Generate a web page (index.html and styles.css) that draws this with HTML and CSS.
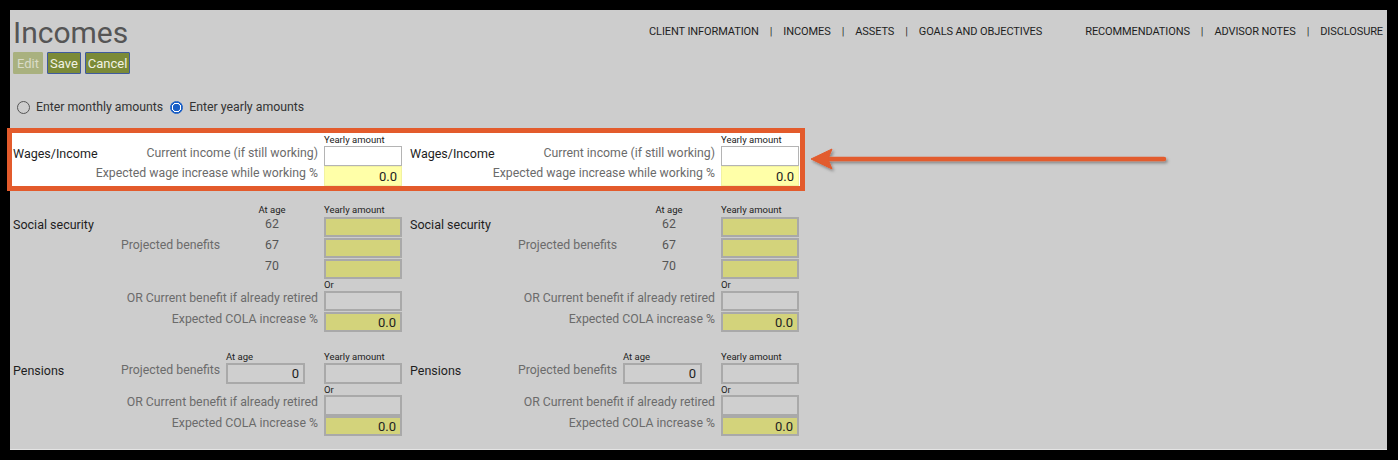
FILE: index.html
```html
<!DOCTYPE html>
<html lang="en">
<head>
  <meta charset="UTF-8">
  <title>Incomes</title>
  <meta name="viewport" content="width=device-width, initial-scale=1.0">
  <link rel="stylesheet" href="styles.css">
</head>
<body>

  <div class="frame">
    <div class="top">
      <div>
        <h1 class="title">Incomes</h1>
        <div class="actions">
          <button class="btn btn-off">Edit</button>
          <button class="btn">Save</button>
          <button class="btn">Cancel</button>
        </div>
      </div>
      <nav class="nav">
        <div class="nav-group">
          <a>CLIENT INFORMATION</a><span class="sep">|</span>
          <a>INCOMES</a><span class="sep">|</span>
          <a>ASSETS</a><span class="sep">|</span>
          <a>GOALS AND OBJECTIVES</a>
        </div>
        <div class="nav-group">
          <a>RECOMMENDATIONS</a><span class="sep">|</span>
          <a>ADVISOR NOTES</a><span class="sep">|</span>
          <a>DISCLOSURE</a>
        </div>
      </nav>
    </div>

    <div class="mode">
      <label class="radio"><span class="dot"></span>Enter monthly amounts</label>
      <label class="radio"><span class="dot on"></span>Enter yearly amounts</label>
    </div>

    <!-- wages -->
    <div class="band band-wages">
      <div class="sect sect-wages">
        <div class="hd col-in">Yearly amount</div>
        <div class="name">Wages/Income</div>
        <div class="lbl span-2">Current income (if still working)</div>
        <div class="field white"></div>
        <div class="lbl span-3">Expected wage increase while working %</div>
        <div class="field yellow">0.0</div>
      </div>
      <div class="sect sect-wages">
        <div class="hd col-in">Yearly amount</div>
        <div class="name">Wages/Income</div>
        <div class="lbl span-2">Current income (if still working)</div>
        <div class="field white"></div>
        <div class="lbl span-3">Expected wage increase while working %</div>
        <div class="field yellow">0.0</div>
      </div>
    </div>

    <!-- social security -->
    <div class="band">
      <div class="sect sect-ss">
        <div class="hd col-age center">At age</div>
        <div class="hd col-in">Yearly amount</div>
        <div class="name">Social security</div>
        <div class="age col-age">62</div>
        <div class="field olive"></div>
        <div class="lbl col-lbl">Projected benefits</div>
        <div class="age col-age">67</div>
        <div class="field olive"></div>
        <div class="age col-age">70</div>
        <div class="field olive"></div>
        <div class="or col-in">Or</div>
        <div class="lbl span-3">OR Current benefit if already retired</div>
        <div class="field gray"></div>
        <div class="lbl span-3">Expected COLA increase %</div>
        <div class="field olive">0.0</div>
      </div>
      <div class="sect sect-ss">
        <div class="hd col-age center">At age</div>
        <div class="hd col-in">Yearly amount</div>
        <div class="name">Social security</div>
        <div class="age col-age">62</div>
        <div class="field olive"></div>
        <div class="lbl col-lbl">Projected benefits</div>
        <div class="age col-age">67</div>
        <div class="field olive"></div>
        <div class="age col-age">70</div>
        <div class="field olive"></div>
        <div class="or col-in">Or</div>
        <div class="lbl span-3">OR Current benefit if already retired</div>
        <div class="field gray"></div>
        <div class="lbl span-3">Expected COLA increase %</div>
        <div class="field olive">0.0</div>
      </div>
    </div>

    <!-- pensions -->
    <div class="band band-pen">
      <div class="sect sect-pen">
        <div class="hd col-age">At age</div>
        <div class="hd col-in">Yearly amount</div>
        <div class="name">Pensions</div>
        <div class="lbl col-lbl">Projected benefits</div>
        <div class="col-age"><div class="field gray age-box">0</div></div>
        <div class="field gray"></div>
        <div class="or col-in">Or</div>
        <div class="lbl span-3">OR Current benefit if already retired</div>
        <div class="field gray"></div>
        <div class="lbl span-3">Expected COLA increase %</div>
        <div class="field olive">0.0</div>
      </div>
      <div class="sect sect-pen">
        <div class="hd col-age">At age</div>
        <div class="hd col-in">Yearly amount</div>
        <div class="name">Pensions</div>
        <div class="lbl col-lbl">Projected benefits</div>
        <div class="col-age"><div class="field gray age-box">0</div></div>
        <div class="field gray"></div>
        <div class="or col-in">Or</div>
        <div class="lbl span-3">OR Current benefit if already retired</div>
        <div class="field gray"></div>
        <div class="lbl span-3">Expected COLA increase %</div>
        <div class="field olive">0.0</div>
      </div>
    </div>
  </div>

  <!-- annotation arrow -->
  <svg class="arrow" width="380" height="40" viewBox="0 0 380 40">
    <defs>
      <filter id="shade" x="-10%" y="-50%" width="120%" height="200%">
        <feDropShadow dx="1.5" dy="2" stdDeviation="1.5" flood-color="#000" flood-opacity="0.35"/>
      </filter>
    </defs>
    <g filter="url(#shade)" fill="#e25b2d" stroke="#e25b2d">
      <line x1="18" y1="16" x2="356" y2="16" stroke-width="4.5" stroke-linecap="round"/>
      <polygon points="3,16 24,6 20,16 24,26" stroke-width="1" stroke-linejoin="round"/>
    </g>
  </svg>

</body>
</html>
```

FILE: styles.css
```css
body {
  margin: 0;
  background: #000;
  font-family: Roboto, "Liberation Sans", sans-serif;
  position: relative;
  width: 1398px;
  height: 460px;
  overflow: hidden;
}

.frame {
  margin: 10px 0 0 10px;
  width: 1377px;
  height: 440px;
  background: #cdcdcd;
  border-bottom: 1px solid #e4e4e4;
  padding-top: 6px;
  box-sizing: border-box;
}

.top {
  display: flex;
  justify-content: space-between;
  align-items: flex-start;
  padding: 0 4px 0 3px;
}

.title {
  margin: 0;
  font-size: 30px;
  line-height: 34px;
  font-weight: 400;
  color: #555;
}

.actions {
  display: flex;
  gap: 4px;
  margin-top: 2px;
}

.btn {
  height: 22px;
  padding: 0 2px;
  font-family: Roboto, sans-serif;
  font-size: 13px;
  color: #f2f2e4;
  background: #7b8a37;
  border: 1px solid #3f5a9e;
  border-radius: 1px;
}

.btn-off {
  background: #a9b17f;
  border-color: #a9b17f;
  color: #dadcc8;
  padding: 0 3px;
}

.nav {
  display: flex;
  gap: 43px;
  margin-top: 9px;
  font-size: 11px;
  line-height: 14px;
  letter-spacing: -0.1px;
  color: #1e1e1e;
}

.nav-group {
  display: flex;
}

.sep {
  margin: 0 11px;
  color: #333;
}

.mode {
  display: flex;
  gap: 7px;
  margin: 24px 0 0 7px;
  font-size: 12.3px;
  line-height: 18px;
  color: #333;
}

.radio {
  display: flex;
  align-items: center;
}

.dot {
  width: 11px;
  height: 11px;
  border: 1px solid #555;
  border-radius: 50%;
  margin-right: 6px;
  box-sizing: content-box;
}

.dot.on {
  border-color: #1a5fc6;
  background: radial-gradient(circle, #1a5fc6 0 3.5px, #fff 4px 4.5px, #1a5fc6 5px);
}

.band {
  display: grid;
  grid-template-columns: 389px 389px;
  column-gap: 8px;
  margin: 18px 0 0 3px;
}

.band-wages {
  width: 788px;
  margin: 17px 0 0 2px;
  padding-left: 1px;
  box-sizing: border-box;
  background: #fff;
  outline: 5px solid #e35b2c;
}

.band-pen {
  margin-top: 19px;
}

.sect {
  display: grid;
  grid-template-columns: 102px 99px 92px 78px;
  column-gap: 6px;
  row-gap: 1px;
  align-items: start;
  font-size: 12.3px;
  line-height: 15px;
}

.sect-wages {
  row-gap: 0;
  grid-template-rows: 13px 20px 20px;
}

.sect-ss {
  grid-template-rows: 12px 20px 20px 20px 10px 20px 20px;
}

.sect-pen {
  row-gap: 0;
  grid-template-rows: 12px 21px 11px 21px 20px;
}

.hd {
  font-size: 9.5px;
  color: #222;
  align-self: end;
  line-height: 12px;
}

.col-lbl { grid-column: 2; }
.col-age { grid-column: 3; }
.col-in { grid-column: 4; }
.span-2 { grid-column: 2 / 4; }
.span-3 { grid-column: 1 / 4; }

.center { text-align: center; }

.name {
  grid-column: 1;
  color: #1e1e1e;
  font-size: 12.5px;
}

.lbl {
  text-align: right;
  color: #6b6b6b;
  white-space: nowrap;
}

.age {
  text-align: center;
  color: #555;
}

.or {
  font-size: 9.5px;
  line-height: 10px;
  color: #222;
  align-self: end;
}

.field {
  grid-column: 4;
  height: 100%;
  align-self: stretch;
  box-sizing: border-box;
  border: 2px solid #a9a9a9;
  text-align: right;
  padding-right: 4px;
  font-size: 13px;
  line-height: 18px;
  color: #222;
}

.field.white {
  background: #fff;
  border: 1px solid #b4b4b4;
}

.field.yellow {
  background: #ffffa8;
  border: 1px solid #f2f2a0;
  line-height: 19px;
}

.field.olive {
  background: #d3d37b;
}

.field.gray {
  background: #cfcfcf;
}

.age-box {
  width: 79px;
  height: 21px;
}

.arrow {
  position: absolute;
  left: 808px;
  top: 143px;
}
```
